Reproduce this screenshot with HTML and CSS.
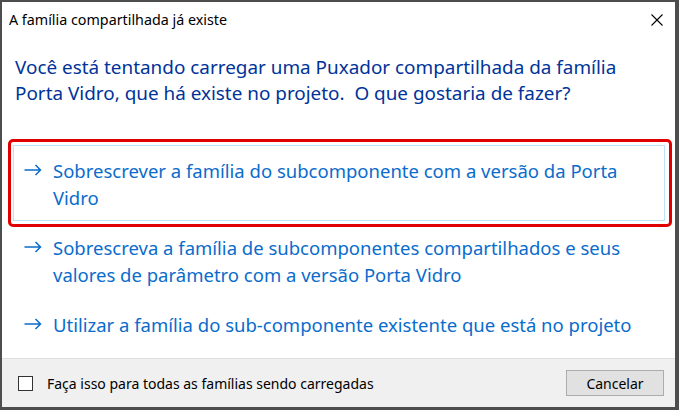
FILE: index.html
```html
<!DOCTYPE html>
<html lang="pt">
<head>
<meta charset="utf-8">
<title>A família compartilhada já existe</title>
<link rel="stylesheet" href="styles.css">
</head>
<body>
<div class="window">
  <div class="titlebar">
    <span class="title">A família compartilhada já existe</span>
    <svg class="close" width="12" height="12" viewBox="0 0 12 12"><path d="M0.5 0.5 L11.5 11.5 M11.5 0.5 L0.5 11.5" stroke="#000" stroke-width="1.1" fill="none"/></svg>
  </div>
  <div class="content">
    <h1 class="instruction">Você está tentando carregar uma Puxador compartilhada da família<br>Porta Vidro, que há existe no projeto.&nbsp; O que gostaria de fazer?</h1>
    <div class="links">
      <a class="cmd hot">
        <span class="arrow"><svg width="18" height="12" viewBox="0 0 18 12"><path d="M0.5 6 H16.5 M11.5 1 L16.5 6 L11.5 11" stroke="currentColor" stroke-width="1.5" fill="none"/></svg></span>
        <span class="label">Sobrescrever a família do subcomponente com a versão da Porta<br>Vidro</span>
      </a>
      <a class="cmd">
        <span class="arrow"><svg width="18" height="12" viewBox="0 0 18 12"><path d="M0.5 6 H16.5 M11.5 1 L16.5 6 L11.5 11" stroke="currentColor" stroke-width="1.5" fill="none"/></svg></span>
        <span class="label">Sobrescreva a família de subcomponentes compartilhados e seus<br>valores de parâmetro com a versão Porta Vidro</span>
      </a>
      <a class="cmd">
        <span class="arrow"><svg width="18" height="12" viewBox="0 0 18 12"><path d="M0.5 6 H16.5 M11.5 1 L16.5 6 L11.5 11" stroke="currentColor" stroke-width="1.5" fill="none"/></svg></span>
        <span class="label">Utilizar a família do sub-componente existente que está no projeto</span>
      </a>
    </div>
  </div>
  <div class="footer">
    <label class="check"><span class="box"></span><span class="check-text">Faça isso para todas as famílias sendo carregadas</span></label>
    <button class="btn">Cancelar</button>
  </div>
</div>
</body>
</html>
```

FILE: styles.css
```css
* { box-sizing: border-box; }
html, body { margin: 0; padding: 0; background: #4d4d4d; }
body { font-family: "Noto Sans", "Open Sans", sans-serif; }

.window {
  width: 679px;
  height: 410px;
  background: #fff;
  border-style: solid;
  border-color: #4d4d4d;
  border-width: 2px 4px 3px 2px;
  display: flex;
  flex-direction: column;
}

.titlebar {
  height: 34px;
  display: flex;
  align-items: center;
  justify-content: space-between;
  padding: 0 12px 0 7px;
}
.title { font-size: 14.3px; color: #000; }
.close { display: block; margin-top: 2px; }

.content { flex: 1; }

.instruction {
  margin: 18px 0 0 13px;
  font-size: 18.9px;
  line-height: 26px;
  font-weight: normal;
  color: #003399;
}

.links {
  margin: 39px 0 0 11px;
  width: 652px;
  display: flex;
  flex-direction: column;
  gap: 1px;
}

.cmd {
  position: relative;
  display: flex;
  align-items: flex-start;
  padding: 11px 10px 9px 10px;
  border: 1px solid transparent;
  color: #0a6ccc;
  font-size: 18.5px;
  line-height: 27px;
}
.cmd.hot { border-color: #bde3f7; }
.cmd.hot::after {
  content: "";
  position: absolute;
  top: -7px; left: -6px; right: -8px; bottom: -7px;
  border: 3px solid #e00000;
  border-radius: 5px;
}
.arrow { width: 29px; flex: none; padding-top: 7px; }
.arrow svg { display: block; }

.footer {
  height: 49px;
  border-top: 1px solid #dfdfdf;
  background: #f0f0f0;
  display: flex;
  align-items: center;
  justify-content: space-between;
  padding: 0 11px 0 16px;
}
.check { display: flex; align-items: center; font-size: 14px; color: #000; }
.box {
  width: 15px; height: 15px;
  border: 1px solid #333;
  background: #fff;
  margin-right: 14px;
}
.btn {
  width: 98px;
  height: 26px;
  background: #e1e1e1;
  border: 1px solid #adadad;
  font-family: "Noto Sans", "Open Sans", sans-serif;
  font-size: 14px;
  color: #000;
  padding: 0;
}
```
